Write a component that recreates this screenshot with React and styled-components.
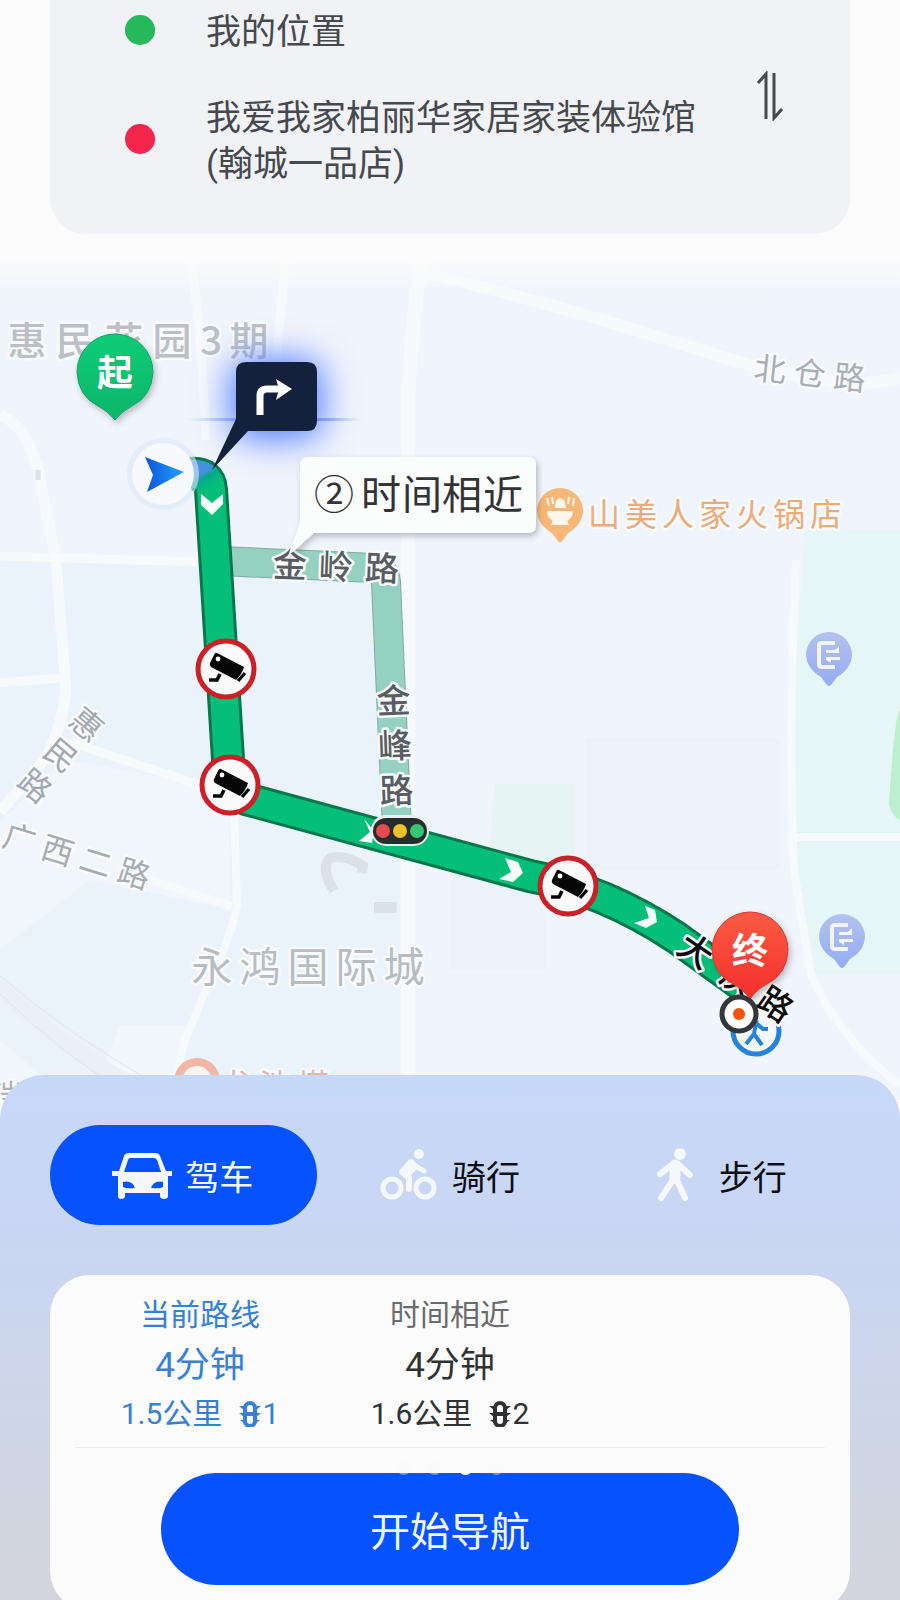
import React, { useState } from 'react';
import styled, { createGlobalStyle } from 'styled-components';

const Blue = '#0652ff';
const BgPage = '#fafbfa';
const BgPlace = '#f0f2f6';
const ColorPlace = '#45484d';
const ColorCurrent = '#3680d8';
const Font = 'Roboto, "Noto Sans CJK SC", sans-serif';

const modes = [
  { id: 'car', name: '驾车' },
  { id: 'bike', name: '骑行' },
  { id: 'walk', name: '步行' },
];

const plans = [
  { id: 1, title: '当前路线', time: '4分钟', distance: '1.5公里', lights: 1 },
  { id: 2, title: '时间相近', time: '4分钟', distance: '1.6公里', lights: 2 },
];

const cameras = [[226, 669], [230, 785], [568, 886]];
const busStops = [[829, 655], [842, 937]];

// one map label, each character centred on its own point of the line
const MapLabel = ({ text, x, y, size, color, step, xs, angle = 0, vertical, halo = '#f8fafc', weight = 400 }) => {
  const chars = [...text];
  const along = xs || chars.map((_, i) => (i - (chars.length - 1) / 2) * step);
  const base = Math.round(size * 0.38);
  return (
    <LabelText
      $size={size}
      $weight={weight}
      fill={color}
      stroke={halo}
      transform={`translate(${x} ${y}) rotate(${angle})`}
      x={vertical ? chars.map(() => 0).join(' ') : along.join(' ')}
      y={vertical ? along.map((a) => a + base).join(' ') : base}
    >
      {text}
    </LabelText>
  );
};

const CameraSign = ({ x, y }) => (
  <g transform={`translate(${x} ${y})`}>
    <circle r="28" fill="#fafafa" stroke="#cc1f26" strokeWidth="5" />
    <path d="M-9 -16 L18 -2 Q16 5 10 11 L-15 -2 Q-17 -4 -16 -6 L-12 -14 Q-11 -17 -9 -16Z" fill="#060606" />
    <circle cx="-8" cy="-10" r="2.4" fill="#fff" />
    <path d="M19 4 L12 12" stroke="#060606" strokeWidth="3.4" />
    <path d="M-6 5 L-9 11 H-17" fill="none" stroke="#060606" strokeWidth="3.6" />
  </g>
);

const BusStop = ({ x, y }) => (
  <g transform={`translate(${x} ${y})`}>
    <path d="M-23 0 A23 23 0 1 1 23 0 Q22 14 8 22 L2 30 Q0 32 -2 30 L-8 22 Q-22 14 -23 0Z" fill="url(#stop)" />
    <path d="M6 -12 H-7 Q-10 -12 -10 -9 V9 Q-10 12 -7 12 H6" fill="none" stroke="#f2f5fd" strokeWidth="4" />
    <path d="M-3 -5 L6 -5 L10 -9 V-2 H-3Z M-3 2 H11 V5 H2 V8 L-3 5Z" fill="#f2f5fd" />
  </g>
);

const RouteMap = () => (
  <MapCanvas viewBox="0 250 900 850" role="img" aria-label="路线地图">
    <defs>
      <linearGradient id="fade" x1="0" y1="0" x2="0" y2="1">
        <stop offset="0" stopColor={BgPage} />
        <stop offset="0.2" stopColor={BgPage} />
        <stop offset="1" stopColor={BgPage} stopOpacity="0" />
      </linearGradient>
      <linearGradient id="stop" x1="0" y1="0" x2="0" y2="1">
        <stop offset="0" stopColor="#b3c2ee" />
        <stop offset="1" stopColor="#93acf3" />
      </linearGradient>
      <linearGradient id="start" x1="0" y1="0" x2="0" y2="1">
        <stop offset="0" stopColor="#10cc76" />
        <stop offset="1" stopColor="#0cb56b" />
      </linearGradient>
      <linearGradient id="end" x1="0" y1="0" x2="0" y2="1">
        <stop offset="0" stopColor="#fb5a44" />
        <stop offset="1" stopColor="#f42f2b" />
      </linearGradient>
      <linearGradient id="arrow" x1="0" y1="0" x2="1" y2="0">
        <stop offset="0" stopColor="#0a55d8" />
        <stop offset="1" stopColor="#25a2ff" />
      </linearGradient>
      <linearGradient id="flare" gradientUnits="userSpaceOnUse" x1="186" y1="0" x2="362" y2="0">
        <stop offset="0" stopColor="#7f9ff0" stopOpacity="0" />
        <stop offset="0.4" stopColor="#6486ea" />
        <stop offset="0.7" stopColor="#6486ea" />
        <stop offset="1" stopColor="#7f9ff0" stopOpacity="0" />
      </linearGradient>
      <linearGradient id="head" x1="0" y1="0" x2="0.7" y2="1">
        <stop offset="0.45" stopColor="#478fe0" />
        <stop offset="0.6" stopColor="#05a98b" />
        <stop offset="0.9" stopColor="#05bf78" />
      </linearGradient>
      <filter id="glow" x="-80%" y="-80%" width="260%" height="260%">
        <feGaussianBlur stdDeviation="17" />
      </filter>
      <filter id="shadow" x="-20%" y="-20%" width="140%" height="140%">
        <feDropShadow dx="2" dy="3" stdDeviation="3" floodOpacity="0.25" />
      </filter>
    </defs>

    {/* land */}
    <rect y="250" width="900" height="850" fill="#f0f4fc" />
    <path d="M0 560 H400 V1100 H0Z" fill="#eaf2fb" />
    <path d="M70 760 L230 790 V910 L90 880 L0 950 V820Z M0 1040 L70 1100 H0Z M120 1025 H190 L165 1100 H90Z" fill="#f1f5fc" />
    <path d="M585 738 H780 V870 H585Z M450 870 H545 V970 H450Z" fill="#edf2fa" />
    <path d="M805 530 H900 V974 H815 L795 870 L791 740Z" fill="#e6f5f5" />
    <path d="M495 784 H574 V870 H487Z" fill="#e6f5f4" />
    <path d="M900 710 Q894 718 889 805 Q892 816 900 820Z" fill="#bdeed0" />

    {/* streets */}
    <Street d="M422 255 Q412 320 408 400 V560 L408 870 V1100" $width={14} />
    <Street d="M422 272 Q560 305 700 350 T900 378" $width={12} />
    <Street d="M190 255 Q202 330 206 440 M286 255 L274 380" $width={9} />
    <Street d="M0 415 Q26 425 38 470 L56 560 L66 690 Q60 740 40 765 L0 812" $width={11} />
    <Street d="M0 556 L200 562 M0 683 L60 678 M70 742 L215 790" $width={9} />
    <Street d="M796 560 Q788 720 794 870 L811 975 Q840 1040 900 1085" $width={8} />
    <Street d="M234 810 L237 905 Q232 935 208 985 L185 1040 L170 1100 M150 880 L232 906 M795 837 H900" $width={8} />
    <path d="M0 988 Q70 1055 160 1100" fill="none" stroke="#ebeff8" strokeWidth="16" />
    <path d="M0 976 Q75 1040 170 1092 M0 994 Q70 1062 150 1108" fill="none" stroke="#e2e5ee" />
    <path d="M334 891 Q320 868 330 858 Q345 854 363 866 L362 873" fill="none" stroke="#dbe1e9" strokeWidth="10" />
    <rect x="374" y="902" width="23" height="11" rx="2" fill="#dbe0e9" />
    <path d="M38 470 v10" stroke="#dbe0e9" strokeWidth="5" />

    <MapLabel text="惠民花园3期" x={138} y={340} xs={[-111, -63, -14, 34, 73, 111]} size={39} color="#bcc0c6" weight={500} />
    <MapLabel text="北仓路" x={810} y={373} step={40} angle={6} size={32} color="#a8aeb6" />
    <MapLabel text="惠民路" x={61} y={755} step={40} angle={40} vertical size={32} color="#a2a8af" />
    <MapLabel text="广西二路" x={77} y={856} step={40} angle={17} size={32} color="#a6acb3" />
    <MapLabel text="永鸿国际城" x={308} y={966} step={48} size={41} color="#b7bcc2" />
    <MapLabel text="山美人家火锅店" x={715} y={514} step={37} size={32} color="#ebac79" />
    <MapLabel text="龙池塔" x={275} y={1085} step={38} size={32} color="#e7b3aa" />
    <MapLabel text="瑞" x={6} y={1096} step={38} size={32} color="#a9b5b3" />
    <circle cx="197" cy="1081" r="19" fill="#f8f4f3" stroke="#f2b6a2" strokeWidth="8" />

    {/* second route */}
    <path d="M220 561 L374 568 Q385 569 386 582 L397 830" fill="none" stroke="#83aaa2" strokeWidth="30" />
    <path d="M220 561 L374 568 Q385 569 386 582 L397 830" fill="none" stroke="#95d1c1" strokeWidth="28" />
    <MapLabel text="金岭路" x={336} y={566} step={46} angle={2} size={34} color="#595d63" weight={500} />
    <MapLabel text="金峰路" x={395} y={745} step={45} angle={-2} vertical size={34} color="#595d63" weight={500} />

    {/* main route */}
    <g fill="none" strokeLinejoin="round">
      <path d="M190 474 Q210 472 211 490 L229 775 Q229 792 246 799 L530 876 Q605 890 677 938 L742 985" stroke="#07774b" strokeWidth="34" />
      <path d="M190 474 Q210 472 211 490 L229 775 Q229 792 246 799 L530 876 Q605 890 677 938 L742 985" stroke="#05bf78" strokeWidth="28" />
    </g>
    <path d="M190 460 Q220 458 225 490 L197 490 Q196 486 190 486Z" fill="url(#head)" />
    <g fill="#f4fffa">
      <path d="M201 494 L212 503 L223 494 V504 L212 515 L201 505Z" />
      <path d="M505 858 L518 862 L523 873 L513 882 L499 879 L511 872Z" />
      <path d="M645 906 L655 910 L657 922 L646 928 L634 923 L649 918Z" />
      <path d="M364 819 L374 831 L372 843 L359 841 L370 832Z" />
    </g>
    {cameras.map(([x, y]) => <CameraSign key={x} x={x} y={y} />)}

    <rect x="371" y="815" width="58" height="31" rx="15" fill="#e9efee" />
    <rect x="373" y="818" width="54" height="26" rx="13" fill="#282c2c" />
    <circle cx="383" cy="831" r="7" fill="#e64a51" />
    <circle cx="400" cy="831" r="7" fill="#edc32a" />
    <circle cx="417" cy="831" r="7" fill="#36c774" />

    {/* place pins */}
    <path d="M537 511 A23 23 0 1 1 583 511 Q582 525 568 533 L562 541 Q560 544 558 541 L552 533 Q538 525 537 511Z" fill="#f6b778" />
    <path d="M547 511 H573 Q573 518 567 521 L569 525 H551 L553 521 Q547 518 547 511Z M555 508 Q555 498 560 498 Q565 498 566 508Z" fill="#fff6ec" />
    <path d="M547 498 L549 506 M552 497 L553 504 M568 504 L569 497 M573 506 L574 498" stroke="#fff6ec" strokeWidth="2" />
    {busStops.map(([x, y]) => <BusStop key={x} x={x} y={y} />)}

    <g filter="url(#shadow)">
      <path d="M77 372 A38 38 0 1 1 153 372 Q152 396 132 406 Q122 411 115 420 Q108 411 98 406 Q78 396 77 372Z" fill="url(#start)" stroke="#0fa565" />
    </g>
    <PinText x="115" y="386">起</PinText>

    <circle cx="163" cy="474" r="36" fill="#dbe7fb" opacity="0.6" />
    <circle cx="163" cy="474" r="31" fill="#f7f9fc" />
    <path d="M145 457 L184 472 L147 492 L153 475Z" fill="url(#arrow)" />

    {/* next turn */}
    <rect x="230" y="358" width="93" height="82" rx="24" fill="#5680ff" filter="url(#glow)" />
    <path d="M186 418 H362 V421 H186Z" fill="url(#flare)" />
    <path d="M246 362 H307 Q317 362 317 372 V421 Q317 431 307 431 H248 L212 470 L236 419 V372 Q236 362 246 362Z" fill="#13213c" />
    <path d="M260 415 V396 Q260 389 267 389 H280" fill="none" stroke="#fff" strokeWidth="7" />
    <path d="M276 379 L292 389 L276 400 L279 389Z" fill="#fff" />

    <g filter="url(#shadow)">
      <path d="M308 457 H528 Q536 457 536 465 V525 Q536 533 528 533 H314 L288 556 L300 523 V465 Q300 457 308 457Z" fill="#fbfcfc" />
    </g>
    <MapLabel text="②时间相近" x={418} y={494} xs={[-84, -37, 4, 44, 85]} size={40} color="#333335" halo="none" />

    {/* destination */}
    <circle cx="756" cy="1031" r="23" fill="#f3f8fd" stroke="#2583dc" strokeWidth="5" />
    <path d="M746 1044 L754 1034 L756 1023 L748 1026 M756 1023 L763 1029 L768 1029 M754 1034 L762 1045" fill="none" stroke="#2583dc" strokeWidth="4" />
    <MapLabel text="大庆路" x={736} y={977} xs={[-48, 4, 48]} angle={34} size={34} color="#0c0c0c" weight={500} />
    <g filter="url(#shadow)">
      <path d="M712 950 A38 38 0 1 1 788 950 Q787 974 767 984 Q757 989 750 999 Q743 989 733 984 Q713 974 712 950Z" fill="url(#end)" stroke="#d8392f" />
    </g>
    <PinText x="750" y="964">终</PinText>
    <circle cx="739" cy="1014" r="17" fill="#fff" stroke="#33373c" strokeWidth="5" />
    <circle cx="739" cy="1014" r="6" fill="#f4530e" />

    <rect y="250" width="900" height="45" fill="url(#fade)" />
  </MapCanvas>
);

const ModeIcon = ({ id }) => (
  <ModeSvg viewBox="0 0 58 58" aria-hidden="true">
    {id === 'car' && (
      <g>
        <path d="M16 7 H42 Q46 7 47 10 L53 25 H59 V30 H55 V50 Q55 53 51 53 Q47 53 47 50 V47 H12 V50 Q12 53 8 53 Q5 53 5 50 V30 H-1 V25 H6 L11 10 Q12 7 16 7Z" fill="currentColor" />
        <path d="M17 12 H41 Q43 12 44 14 L48 26 H11 L15 14 Q16 12 17 12Z M10 36 Q19 34 22 42 Q13 43 10 41Z M50 36 Q41 34 38 42 Q47 43 50 41Z" fill={Blue} />
      </g>
    )}
    {id === 'bike' && (
      <g fill="none" stroke="currentColor" strokeLinecap="round" strokeLinejoin="round">
        <circle cx="12" cy="42" r="9" strokeWidth="5" />
        <circle cx="45" cy="42" r="9" strokeWidth="5" />
        <circle cx="39" cy="8" r="5" fill="currentColor" stroke="none" />
        <path d="M30 17 L22 26 L29 32 L29 43" strokeWidth="6" />
        <path d="M31 16 L37 21 L44 25" strokeWidth="5" />
        <path d="M31 17 L34 21 L27 28" strokeWidth="7" />
      </g>
    )}
    {id === 'walk' && (
      <g fill="none" stroke="currentColor" strokeLinecap="round" strokeLinejoin="round">
        <circle cx="33" cy="8" r="6" fill="currentColor" stroke="none" />
        <path d="M28 19 V32" strokeWidth="11" />
        <path d="M26 18 L13 28 M31 18 L43 29" strokeWidth="6" />
        <path d="M26 34 L14 52 M30 34 L38 52" strokeWidth="6" />
      </g>
    )}
  </ModeSvg>
);

const LightIcon = () => (
  <LightSvg viewBox="0 0 24 26" aria-hidden="true">
    <rect x="7" y="2" width="10" height="23" rx="5" />
    <path d="M8 13 H16" />
    <path d="M1 5 H6 V9Z M1 12 H6 V16Z M2 19 H6 V22Z M23 5 H18 V9Z M23 12 H18 V16Z M22 19 H18 V22Z" fill="currentColor" stroke="none" />
  </LightSvg>
);

const App = () => {
  const [mode, setMode] = useState('car');
  const [plan, setPlan] = useState(1);

  return (
    <>
      <GlobalStyle />
      <Screen>
        <Header>
          <PlaceCard>
            <PlaceList>
              <PlaceRow>
                <PlaceDot $color="#26b95c" />
                <PlaceName>我的位置</PlaceName>
              </PlaceRow>
              <PlaceRow>
                <PlaceDot $color="#f2254d" />
                <PlaceName>我爱我家柏丽华家居家装体验馆<br />(翰城一品店)</PlaceName>
              </PlaceRow>
            </PlaceList>
            <SwapButton aria-label="交换起点和终点">
              <SwapSvg viewBox="0 0 28 50" aria-hidden="true">
                <path d="M2 12 L10 3 V48 M18 2 V47 L26 38" />
              </SwapSvg>
            </SwapButton>
          </PlaceCard>
        </Header>

        <RouteMap />

        <Sheet>
          <ModeBar>
            {modes.map((item) => (
              <ModeButton key={item.id} $active={mode === item.id} onClick={() => setMode(item.id)}>
                <ModeIcon id={item.id} />
                {item.name}
              </ModeButton>
            ))}
          </ModeBar>

          <PlanCard>
            <PlanList>
              {plans.map((item) => (
                <PlanButton key={item.id} $active={plan === item.id} onClick={() => setPlan(item.id)}>
                  <PlanTitle $active={plan === item.id}>{item.title}</PlanTitle>
                  <PlanTime>{item.time}</PlanTime>
                  <PlanInfo>
                    {item.distance}
                    <PlanLights><LightIcon />{item.lights}</PlanLights>
                  </PlanInfo>
                </PlanButton>
              ))}
            </PlanList>
            <StartArea>
              <StartButton>开始导航</StartButton>
              <PageDots>
                <PageDot />
                <PageDot />
                <PageDot $active />
                <PageDot />
              </PageDots>
            </StartArea>
          </PlanCard>
        </Sheet>
      </Screen>
    </>
  );
};

const GlobalStyle = createGlobalStyle`
  * {
    box-sizing: border-box;
  }

  body {
    margin: 0;
    background-color: ${BgPage};
    font-family: ${Font};
  }

  button {
    border: none;
    padding: 0;
    background: none;
    font-family: inherit;
    cursor: pointer;
  }
`;

const Screen = styled.main`
  display: flex;
  flex-direction: column;
  height: 100vh;
  overflow: hidden;
`;

const Header = styled.header`
  flex: none;
  padding: 0 50px 16px;
`;

const PlaceCard = styled.section`
  display: flex;
  align-items: center;
  justify-content: space-between;
  padding: 4px 66px 46px 75px;
  border-radius: 0 0 36px 36px;
  background-color: ${BgPlace};
`;

const PlaceList = styled.div`
  display: flex;
  flex-direction: column;
  gap: 34px;
`;

const PlaceRow = styled.div`
  display: flex;
  align-items: center;
  gap: 51px;
`;

const PlaceDot = styled.span`
  flex: none;
  width: 30px;
  height: 30px;
  border-radius: 50%;
  background-color: ${({ $color }) => $color};
`;

const PlaceName = styled.span`
  padding-top: 6px;
  color: ${ColorPlace};
  font-size: 35px;
  line-height: 46px;
`;

const SwapButton = styled.button`
  display: flex;
`;

const SwapSvg = styled.svg`
  width: 28px;
  height: 50px;
  fill: none;
  stroke: ${ColorPlace};
  stroke-width: 3;
`;

const MapCanvas = styled.svg`
  display: block;
  flex: none;
  width: 100%;
`;

const LabelText = styled.text`
  font-size: ${({ $size }) => $size}px;
  font-weight: ${({ $weight }) => $weight};
  font-family: "Noto Sans CJK SC", sans-serif;
  text-anchor: middle;
  stroke-width: 5px;
  stroke-linejoin: round;
  paint-order: stroke;
`;

const PinText = styled.text`
  fill: #fff;
  font-size: 36px;
  font-weight: 700;
  text-anchor: middle;
`;

const Street = styled.path`
  fill: none;
  stroke: #f9fbfb;
  stroke-width: ${({ $width }) => $width}px;
  opacity: 0.8;
`;

const Sheet = styled.section`
  position: relative;
  flex: none;
  margin-top: -25px;
  padding: 50px 50px 32px;
  border-radius: 44px 44px 0 0;
  background: linear-gradient(#c6d8f9, #cad6f1 35%, #d2d5de 85%);
`;

const ModeBar = styled.nav`
  display: grid;
  grid-template-columns: repeat(3, 1fr);
`;

const ModeButton = styled.button`
  display: flex;
  align-items: center;
  justify-content: center;
  gap: 14px;
  height: 100px;
  border-radius: 50px;
  background-color: ${({ $active }) => ($active ? Blue : 'transparent')};
  color: ${({ $active }) => ($active ? '#f2f7ff' : '#0c0e14')};
  font-size: 34px;
`;

const ModeSvg = styled.svg`
  width: 58px;
  height: 58px;
  color: #f4f8fd;
  overflow: visible;
`;

const PlanCard = styled.section`
  margin-top: 50px;
  padding: 16px 25px 26px;
  border-radius: 40px;
  background-color: ${BgPage};
`;

const PlanList = styled.div`
  display: grid;
  grid-template-columns: repeat(3, 1fr);
  padding-bottom: 12px;
  border-bottom: 1px solid #ebecec;
`;

const PlanButton = styled.button`
  display: flex;
  flex-direction: column;
  align-items: center;
  color: ${({ $active }) => ($active ? ColorCurrent : '#303133')};
`;

const PlanTitle = styled.span`
  color: ${({ $active }) => ($active ? ColorCurrent : '#6a6b6d')};
  font-size: 30px;
  line-height: 48px;
`;

const PlanTime = styled.span`
  font-size: 35px;
  line-height: 54px;
`;

const PlanInfo = styled.span`
  display: flex;
  gap: 16px;
  font-size: 30px;
  line-height: 42px;
`;

const PlanLights = styled.span`
  display: flex;
  align-items: center;
`;

const LightSvg = styled.svg`
  width: 24px;
  height: 26px;
  fill: none;
  stroke: currentColor;
  stroke-width: 4;
`;

const StartArea = styled.div`
  position: relative;
  display: flex;
  justify-content: center;
  margin-top: 25px;
`;

const StartButton = styled.button`
  width: 77%;
  height: 112px;
  border-radius: 56px;
  background-color: ${Blue};
  color: #f2f7ff;
  font-size: 40px;
`;

const PageDots = styled.div`
  position: absolute;
  top: -13px;
  display: flex;
  gap: 16px;
`;

const PageDot = styled.span`
  width: 15px;
  height: 15px;
  border-radius: 50%;
  background-color: ${BgPage};
  opacity: ${({ $active }) => ($active ? 1 : 0.4)};
`;

export default App;
